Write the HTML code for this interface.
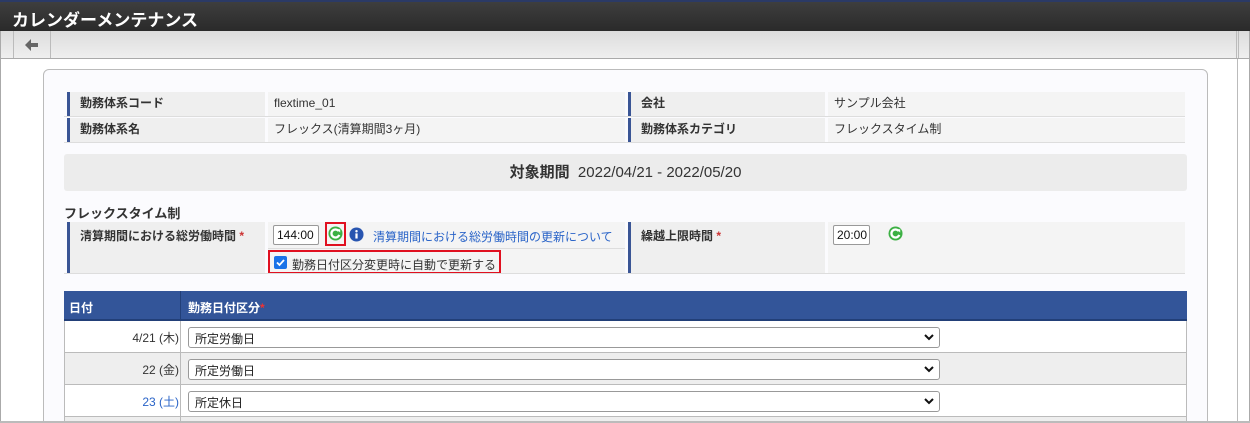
<!DOCTYPE html>
<html style="width:1250px;height:423px;overflow:hidden"><head><meta charset="utf-8"><style>
*{box-sizing:border-box;margin:0;padding:0}
body{width:1250px;height:423px;overflow:hidden;background:#fff;font-family:"Liberation Sans","Noto Sans CJK JP",sans-serif;font-size:12px;color:#333;position:relative}
.abs{position:absolute}
.title{left:0;top:0;width:1250px;height:31px;background:linear-gradient(#3e3e3e,#2a2a2a);border-top:2px solid #2b3a66}
.title span{position:absolute;left:12px;top:4px;color:#fff;font-weight:bold;font-size:17px}
.tool{left:0;top:31px;width:1250px;height:28px;background:linear-gradient(#dcdcdc,#efefef);border-bottom:1px solid #aaa}
.card{left:43px;top:69px;width:1165px;height:360px;border:1px solid #bbb;border-radius:6px;background:#fbfbfe}
.lab{background:#efefef;border-left:3px solid #3a5595;font-weight:bold;padding-left:10px;color:#333}
.val{background:#f4f4f4;padding-left:6px}
.sel{background:#fff;border:1px solid #999;border-radius:3px;height:21px;width:752px;font-size:12px;padding:2px 6px;color:#222}
.chev{position:absolute;right:5px;top:5px}
.inp{background:#fff;border:1px solid #999;border-radius:2px;height:20px;font-size:12px;padding:2px 3px;color:#111}
</style></head><body>
<div class="abs title"><span>カレンダーメンテナンス</span></div>
<div class="abs tool">
 <div class="abs" style="left:13px;top:0;width:38px;height:27px;border-left:1px solid #bbb;border-right:1px solid #bbb"></div>
 <svg class="abs" style="left:25px;top:8px" width="14" height="12" viewBox="0 0 14 12"><path d="M0 6L6 0V4H13V8H6V12Z" fill="#666"/></svg>
 <div class="abs" style="left:1236px;top:0;width:3px;height:27px;border-left:1px solid #bbb;border-right:1px solid #bbb"></div>
</div>
<div class="abs card"></div>
<div class="abs" style="left:1237px;top:59px;width:1px;height:364px;background:#bbb"></div>
<div class="abs" style="left:0;top:31px;width:1px;height:392px;background:#aaa"></div>
<div class="abs" style="left:1249px;top:31px;width:1px;height:392px;background:#aaa"></div>

<div class="abs lab" style="left:67px;top:92px;width:198px;height:24px;line-height:23px">勤務体系コード</div>
<div class="abs val" style="left:268px;top:92px;width:357px;height:24px;line-height:23px">flextime_01</div>
<div class="abs lab" style="left:628px;top:92px;width:197px;height:24px;line-height:23px">会社</div>
<div class="abs val" style="left:828px;top:92px;width:357px;height:24px;line-height:23px">サンプル会社</div>
<div class="abs lab" style="left:67px;top:118px;width:198px;height:24px;line-height:23px">勤務体系名</div>
<div class="abs val" style="left:268px;top:118px;width:357px;height:24px;line-height:23px">フレックス(清算期間3ヶ月)</div>
<div class="abs lab" style="left:628px;top:118px;width:197px;height:24px;line-height:23px">勤務体系カテゴリ</div>
<div class="abs val" style="left:828px;top:118px;width:357px;height:24px;line-height:23px">フレックスタイム制</div>
<div class="abs" style="left:64px;top:116px;width:1121px;height:1px;background:#ddd"></div>
<div class="abs" style="left:64px;top:142px;width:1121px;height:1px;background:#ddd"></div>

<div class="abs" style="left:64px;top:154px;width:1123px;height:37px;background:#ececec;border-radius:3px;text-align:center;line-height:37px;font-size:15px"><b>対象期間</b>&nbsp; 2022/04/21 - 2022/05/20</div>

<div class="abs" style="left:64px;top:203px;font-size:13px;font-weight:bold;color:#333">フレックスタイム制</div>

<div class="abs lab" style="left:67px;top:222px;width:198px;height:51px;padding-top:5px">清算期間における総労働時間 <span style="color:#c33">*</span></div>
<div class="abs val" style="left:268px;top:222px;width:357px;height:51px;padding:0"></div>
<div class="abs" style="left:268px;top:248px;width:357px;height:1px;background:#ddd"></div>
<div class="abs inp" style="left:273px;top:225px;width:46px">144:00</div>
<div class="abs" style="left:325px;top:222px;width:21px;height:24px;border:2px solid #e01020"></div>
<svg class="abs" style="left:328px;top:226px" width="15" height="15" viewBox="0 0 16 16"><circle cx="8" cy="8" r="7.5" fill="#3cb043"/><path d="M11.5 5.5A4.3 4.3 0 1 0 12 9.5" stroke="#fff" stroke-width="2.4" fill="none"/><path d="M9.5 3.5L13 3.5 13 7Z" fill="#fff"/></svg>
<svg class="abs" style="left:349px;top:227px" width="15" height="15" viewBox="0 0 16 16"><circle cx="8" cy="8" r="7.5" fill="#2855b0"/><circle cx="8" cy="4.5" r="1.3" fill="#fff"/><rect x="6.8" y="6.8" width="2.4" height="5.5" fill="#fff"/></svg>
<div class="abs" style="left:373px;top:228px;color:#2a64c8">清算期間における総労働時間の更新について</div>
<div class="abs" style="left:268px;top:250px;width:233px;height:24px;border:2px solid #e01020"></div>
<div class="abs" style="left:274px;top:256px;width:13px;height:13px;background:#1a73e8;border-radius:2px"></div>
<svg class="abs" style="left:275px;top:257px" width="11" height="11" viewBox="0 0 11 11"><path d="M2 5.5L4.5 8 9 3" stroke="#fff" stroke-width="1.8" fill="none"/></svg>
<div class="abs" style="left:292px;top:256px">勤務日付区分変更時に自動で更新する</div>
<div class="abs" style="left:64px;top:273px;width:1121px;height:1px;background:#ddd"></div>

<div class="abs lab" style="left:628px;top:222px;width:197px;height:51px;padding-top:5px">繰越上限時間 <span style="color:#c33">*</span></div>
<div class="abs val" style="left:828px;top:222px;width:357px;height:51px"></div>
<div class="abs inp" style="left:833px;top:225px;width:37px">20:00</div>
<svg class="abs" style="left:888px;top:226px" width="15" height="15" viewBox="0 0 16 16"><circle cx="8" cy="8" r="7.5" fill="#3cb043"/><path d="M11.5 5.5A4.3 4.3 0 1 0 12 9.5" stroke="#fff" stroke-width="2.4" fill="none"/><path d="M9.5 3.5L13 3.5 13 7Z" fill="#fff"/></svg>

<div class="abs" style="left:64px;top:291px;width:1123px;height:30px;background:#335599;border-bottom:2px solid #223f78;color:#fff;font-weight:bold;font-size:12px">
 <div class="abs" style="left:5px;top:8px">日付</div>
 <div class="abs" style="left:116px;top:0;width:1px;height:28px;background:#223f78"></div>
 <div class="abs" style="left:124px;top:8px">勤務日付区分<span style="color:#e33">*</span></div>
</div>

<div class="abs" style="left:64px;top:321px;width:1123px;height:32px;background:#fff;border:1px solid #bbb;border-top:none"></div>
<div class="abs" style="left:64px;top:353px;width:1123px;height:32px;background:#eee;border:1px solid #bbb;border-top:none"></div>
<div class="abs" style="left:64px;top:385px;width:1123px;height:32px;background:#fff;border:1px solid #bbb;border-top:none"></div>
<div class="abs" style="left:64px;top:417px;width:1123px;height:6px;background:#eee;border-left:1px solid #bbb;border-right:1px solid #bbb"></div>
<div class="abs" style="left:180px;top:321px;width:1px;height:102px;background:#bbb"></div>
<div class="abs" style="right:1071px;top:329px;text-align:right">4/21 (木)</div>
<div class="abs" style="right:1071px;top:361px;text-align:right">22 (金)</div>
<div class="abs" style="right:1071px;top:393px;text-align:right;color:#2a64c8">23 (土)</div>
<div class="abs sel" style="left:188px;top:327px">所定労働日<svg class="chev" width="10" height="8" viewBox="0 0 10 8"><path d="M1 2L5 6 9 2" stroke="#111" stroke-width="2" fill="none"/></svg></div>
<div class="abs sel" style="left:188px;top:359px">所定労働日<svg class="chev" width="10" height="8" viewBox="0 0 10 8"><path d="M1 2L5 6 9 2" stroke="#111" stroke-width="2" fill="none"/></svg></div>
<div class="abs sel" style="left:188px;top:391px">所定休日<svg class="chev" width="10" height="8" viewBox="0 0 10 8"><path d="M1 2L5 6 9 2" stroke="#111" stroke-width="2" fill="none"/></svg></div>
<div class="abs" style="left:0;top:421px;width:1250px;height:2px;background:#bbb"></div>
</body></html>
